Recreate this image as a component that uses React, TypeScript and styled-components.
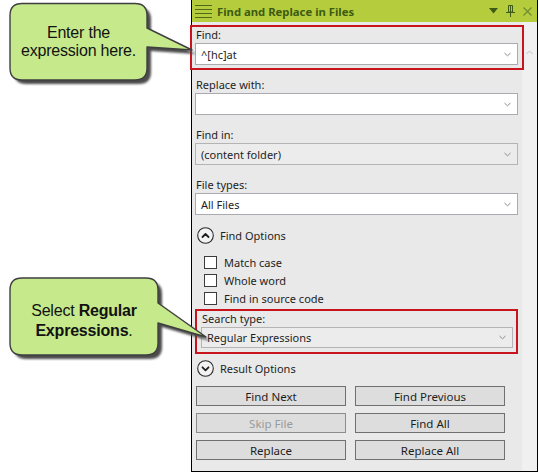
import React from 'react';
import styled, { createGlobalStyle } from 'styled-components';

const GlobalStyle = createGlobalStyle`
  html, body {
    margin: 0;
    padding: 0;
    background: #ffffff;
  }
  body {
    font-family: 'Noto Sans', 'Segoe UI', sans-serif;
  }
`;

const Stage = styled.div`
  position: relative;
  width: 539px;
  height: 474px;
  overflow: hidden;
`;

const Panel = styled.div`
  margin-left: 191px;
  width: 347px;
  height: 472px;
  box-sizing: border-box;
  border: 1px solid #000000;
  border-top: none;
  display: flex;
  flex-direction: column;
  font-family: 'Noto Sans', sans-serif;
  font-size: 11px;
  color: #1e1e1e;
`;

const TitleBar = styled.div`
  height: 22px;
  flex: none;
  display: flex;
  align-items: center;
  padding: 0 3px;
  background: #b5cd3c;
  color: #3d5b12;
`;

const Title = styled.span`
  margin-left: 5px;
  font-weight: bold;
  font-size: 11.3px;
  flex: 1;
  white-space: nowrap;
`;

const TitleTools = styled.div`
  display: flex;
  align-items: center;
  gap: 8px;
  margin-right: 2px;

  & svg {
    display: block;
  }
`;

const Body = styled.div`
  flex: 1;
  display: flex;
  min-height: 0;
`;

const Content = styled.div`
  flex: 1;
  background: #e9e9e9;
  padding: 5px 4px 0 3px;
  display: flex;
  flex-direction: column;
`;

const ScrollTrack = styled.div`
  width: 15px;
  flex: none;
  background: #f0f0f0;
  display: flex;
  justify-content: center;
  padding-top: 28px;
  box-sizing: border-box;

  & svg {
    display: block;
  }
`;

const Fields = styled.div`
  display: flex;
  flex-direction: column;
  gap: 12px;
`;

const FieldGroup = styled.div<{ $highlight?: boolean; $inset?: string }>`
  position: relative;
  display: flex;
  flex-direction: column;

  ${({ $highlight, $inset }) =>
    $highlight &&
    `
    &::after {
      content: '';
      position: absolute;
      inset: ${$inset};
      border: 2px solid #c8141c;
      pointer-events: none;
    }
  `}
`;

const Label = styled.div`
  height: 16px;
  line-height: 15px;
  padding-left: 1px;
`;

const Field = styled.div<{ $gray?: boolean; $height?: number }>`
  height: ${({ $height }) => $height ?? 22}px;
  box-sizing: border-box;
  border: 1px solid ${({ $gray }) => ($gray ? '#b4b4b4' : '#a9abb0')};
  background: ${({ $gray }) => ($gray ? '#ececec' : '#ffffff')};
  display: flex;
  align-items: center;
  justify-content: space-between;
  padding: 0 6px 0 5px;
  white-space: nowrap;
`;

const SearchGroup = styled(FieldGroup)`
  margin: 4px 5px 0 6px;
`;

const Toggle = styled.div<{ $top: number }>`
  height: 17px;
  margin-top: ${({ $top }) => $top}px;
  padding-left: 2px;
  display: flex;
  align-items: center;
  gap: 6px;

  & svg {
    display: block;
  }
`;

const CheckList = styled.div`
  margin-top: 9px;
  padding-left: 9px;
  display: flex;
  flex-direction: column;
`;

const CheckRow = styled.div`
  height: 18px;
  display: flex;
  align-items: center;
  gap: 7px;
`;

const CheckBox = styled.span`
  width: 13px;
  height: 13px;
  box-sizing: border-box;
  border: 1px solid #3c3c3c;
  background: #ffffff;
`;

const ButtonGrid = styled.div`
  margin: 9px 0 0 1px;
  display: grid;
  grid-template-columns: 150px 150px;
  grid-auto-rows: 20px;
  column-gap: 9px;
  row-gap: 7px;
`;

const Button = styled.button`
  font: inherit;
  font-size: 11.5px;
  margin: 0;
  padding: 0;
  box-sizing: border-box;
  border: 1px solid #707070;
  background: #dddddd;
  color: #1e1e1e;

  &:disabled {
    color: #9b9b9b;
    border-color: #8c8c8c;
  }
`;

const Callout = styled.div<{ $left: number; $top: number; $w: number; $h: number }>`
  position: absolute;
  left: ${({ $left }) => $left}px;
  top: ${({ $top }) => $top}px;
  width: ${({ $w }) => $w}px;
  height: ${({ $h }) => $h}px;

  & svg {
    position: absolute;
    left: 0;
    top: 0;
  }
`;

const CalloutText = styled.div<{ $box: [number, number, number, number]; $line: number; $shift: number }>`
  position: absolute;
  left: ${({ $box }) => $box[0]}px;
  top: ${({ $box, $shift }) => $box[1] + $shift}px;
  width: ${({ $box }) => $box[2]}px;
  height: ${({ $box }) => $box[3]}px;
  display: flex;
  align-items: center;
  justify-content: center;
  text-align: center;
  font-family: 'Liberation Sans', Arial, sans-serif;
  font-size: 16px;
  line-height: ${({ $line }) => $line}px;
  color: #121212;
  letter-spacing: -0.2px;

  & b {
    font-weight: bold;
  }
`;

const Chevron = () => (
  <svg width="7" height="5" viewBox="0 0 7 5">
    <polyline points="0.5,1 3.5,3.8 6.5,1" fill="none" stroke="#8a8a8a" strokeWidth="1" />
  </svg>
);

const ToggleIcon = ({ open }: { open: boolean }) => (
  <svg width="17" height="17" viewBox="0 0 17 17">
    <circle cx="8.5" cy="8.5" r="7.8" fill="#f2f2f2" stroke="#2a2a2a" strokeWidth="1.1" />
    <polyline
      points={open ? '5.5,10 8.5,7 11.5,10' : '5.5,7.3 8.5,10.3 11.5,7.3'}
      fill="none"
      stroke="#1e1e1e"
      strokeWidth="1.8"
      strokeLinecap="round"
      strokeLinejoin="round"
    />
  </svg>
);

const MenuIcon = () => (
  <svg width="17" height="22" viewBox="0 0 17 22">
    {[5.5, 9.5, 13.5, 17.5].map((y) => (
      <line key={y} x1="0" y1={y} x2="17" y2={y} stroke="#4d6a17" strokeWidth="1" />
    ))}
  </svg>
);

const DropIcon = () => (
  <svg width="9" height="6" viewBox="0 0 9 6">
    <polygon points="0,0 9,0 4.5,5.5" fill="#3d5b12" />
  </svg>
);

const PinIcon = () => (
  <svg width="9" height="12" viewBox="0 0 9 12">
    <path d="M2.5 0.5 H6.5 V7 H2.5 Z" fill="none" stroke="#3d5b12" strokeWidth="1" />
    <line x1="4.5" y1="1" x2="4.5" y2="7" stroke="#3d5b12" strokeWidth="1" />
    <line x1="0" y1="7.5" x2="9" y2="7.5" stroke="#3d5b12" strokeWidth="1" />
    <line x1="4.5" y1="7.5" x2="4.5" y2="12" stroke="#3d5b12" strokeWidth="1" />
  </svg>
);

const CloseIcon = () => (
  <svg width="9" height="9" viewBox="0 0 9 9">
    <path d="M0.5 0.5 L8.5 8.5 M8.5 0.5 L0.5 8.5" stroke="#6f8a2e" strokeWidth="1.1" />
  </svg>
);

const ScrollUp = () => (
  <svg width="7" height="5" viewBox="0 0 7 5">
    <polyline points="0.5,4 3.5,1 6.5,4" fill="none" stroke="#c2c2c2" strokeWidth="1" />
  </svg>
);

interface BubbleProps {
  path: string;
  w: number;
  h: number;
}

const Bubble = ({ path, w, h }: BubbleProps) => (
  <svg width={w} height={h} viewBox={`0 0 ${w} ${h}`}>
    <defs>
      <filter id={`soft${h}`} x="-10%" y="-10%" width="130%" height="130%">
        <feGaussianBlur stdDeviation="0.9" />
      </filter>
    </defs>
    <path d={path} transform="translate(4 4)" fill="#4c4c4c" filter={`url(#soft${h})`} />
    <path d={path} fill="#c5e98b" stroke="#3f3f3f" strokeWidth="1.4" strokeLinejoin="round" />
  </svg>
);

const fields = [
  { label: 'Find:', value: '^[hc]at', highlight: true },
  { label: 'Replace with:', value: '' },
  { label: 'Find in:', value: '(content folder)', gray: true },
  { label: 'File types:', value: 'All Files' },
];

const checks = ['Match case', 'Whole word', 'Find in source code'];

const buttons = [
  { label: 'Find Next' },
  { label: 'Find Previous' },
  { label: 'Skip File', disabled: true },
  { label: 'Find All' },
  { label: 'Replace' },
  { label: 'Replace All' },
];

export default function App() {
  return (
    <Stage>
      <GlobalStyle />
      <Panel>
        <TitleBar>
          <MenuIcon />
          <Title>Find and Replace in Files</Title>
          <TitleTools>
            <DropIcon />
            <PinIcon />
            <CloseIcon />
          </TitleTools>
        </TitleBar>
        <Body>
          <Content>
            <Fields>
              {fields.map((f) => (
                <FieldGroup key={f.label} $highlight={f.highlight} $inset="-2px -6px -5px -5px">
                  <Label>{f.label}</Label>
                  <Field $gray={f.gray}>
                    <span>{f.value}</span>
                    <Chevron />
                  </Field>
                </FieldGroup>
              ))}
            </Fields>

            <Toggle $top={12}>
              <ToggleIcon open />
              <span>Find Options</span>
            </Toggle>

            <CheckList>
              {checks.map((c) => (
                <CheckRow key={c}>
                  <CheckBox />
                  <span>{c}</span>
                </CheckRow>
              ))}
            </CheckList>

            <SearchGroup $highlight $inset="-2px -5px -6px -6px">
              <Label>Search type:</Label>
              <Field $gray $height={21}>
                <span>Regular Expressions</span>
                <Chevron />
              </Field>
            </SearchGroup>

            <Toggle $top={12}>
              <ToggleIcon open={false} />
              <span>Result Options</span>
            </Toggle>

            <ButtonGrid>
              {buttons.map((b) => (
                <Button key={b.label} disabled={b.disabled}>
                  {b.label}
                </Button>
              ))}
            </ButtonGrid>
          </Content>
          <ScrollTrack>
            <ScrollUp />
          </ScrollTrack>
        </Body>
      </Panel>

      <Callout $left={0} $top={0} $w={200} $h={90}>
        <Bubble
          w={200}
          h={90}
          path="M22 3.5 H135 Q147 3.5 147 15.5 V28 L192 50 L147 47 V68 Q147 80 135 80 H22 Q10 80 10 68 V15.5 Q10 3.5 22 3.5 Z"
        />
        <CalloutText $box={[10, 3, 137, 77]} $line={18} $shift={0}>
          Enter the
          <br />
          expression here.
        </CalloutText>
      </Callout>

      <Callout $left={0} $top={270} $w={215} $h={95}>
        <Bubble
          w={215}
          h={95}
          path="M22 8 H146 Q158 8 158 20 V33 L206 67 L158 53 V73 Q158 85 146 85 H22 Q10 85 10 73 V20 Q10 8 22 8 Z"
        />
        <CalloutText $box={[10, 8, 148, 77]} $line={20} $shift={4}>
          <span>
            Select <b>Regular</b>
            <br />
            <b>Expressions</b>.
          </span>
        </CalloutText>
      </Callout>
    </Stage>
  );
}
